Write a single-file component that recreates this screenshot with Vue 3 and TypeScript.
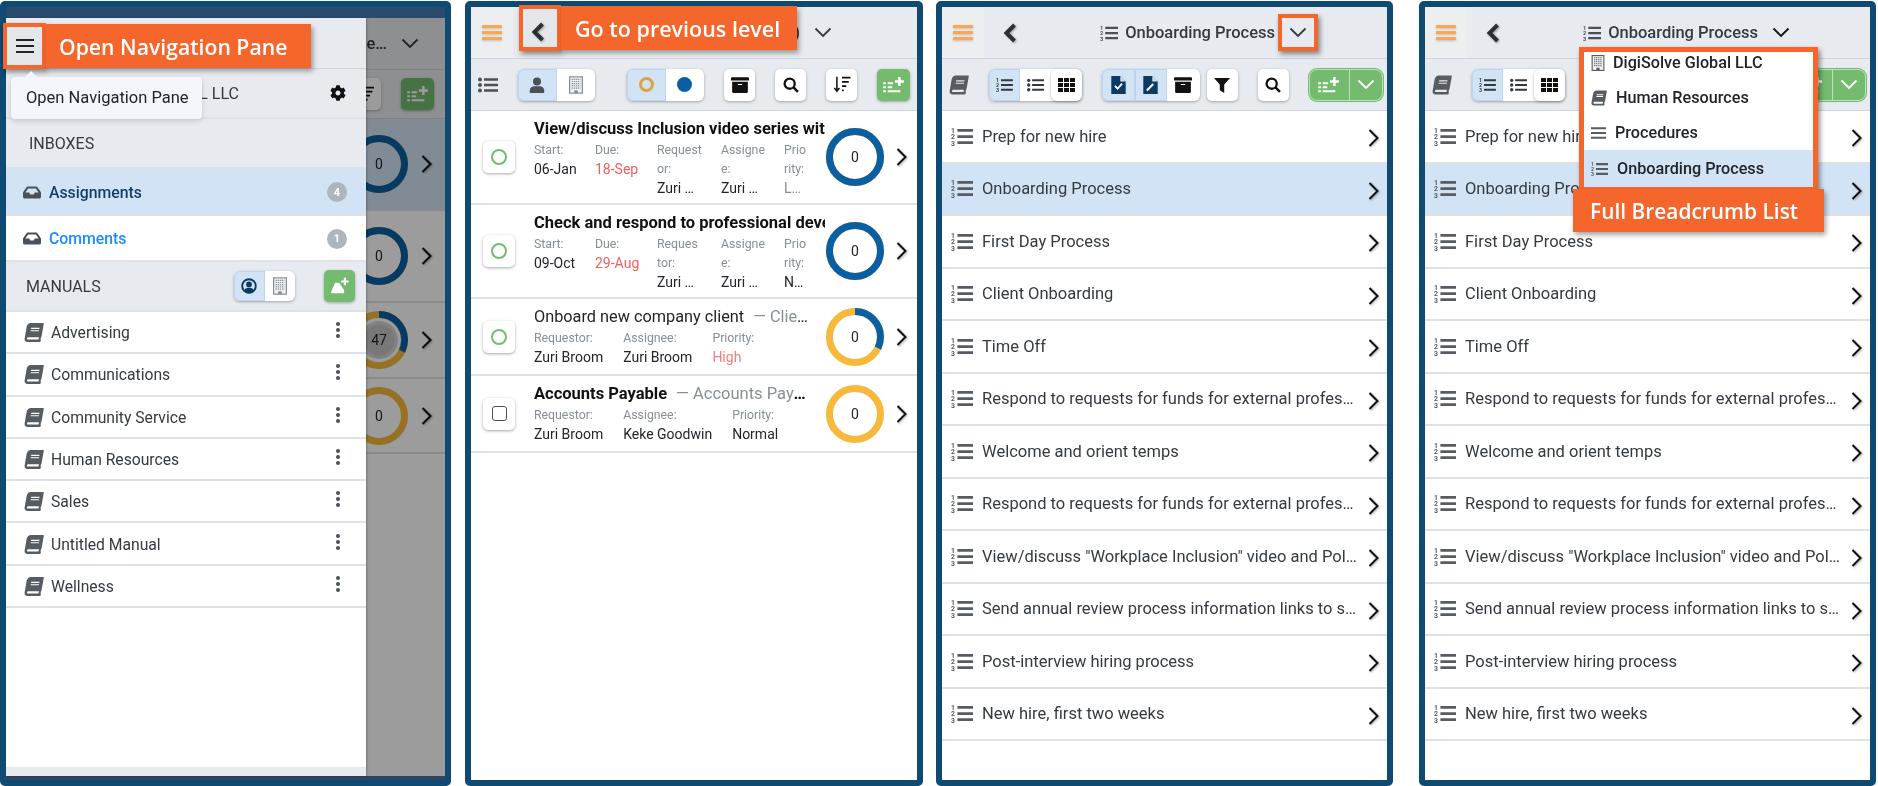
<script setup lang="ts">
type Col = { label: string; value: string; tone?: string };
type Task = {
  title: string;
  sub?: string;
  bold?: boolean;
  tall?: boolean;
  check: 'circle' | 'square';
  pct: number;
  cols: Col[];
};

const RADIUS = 25.5;
const LEN = 2 * Math.PI * RADIUS;

const tasks: Task[] = [
  {
    title: 'View/discuss Inclusion video series with leadership team',
    bold: true,
    tall: true,
    check: 'circle',
    pct: 100,
    cols: [
      { label: 'Start:', value: '06-Jan' },
      { label: 'Due:', value: '18-Sep', tone: 'late' },
      { label: 'Request\nor:', value: 'Zuri …' },
      { label: 'Assigne\ne:', value: 'Zuri …' },
      { label: 'Prio\nrity:', value: 'L…', tone: 'muted' },
    ],
  },
  {
    title: 'Check and respond to professional development requests',
    bold: true,
    tall: true,
    check: 'circle',
    pct: 100,
    cols: [
      { label: 'Start:', value: '09-Oct' },
      { label: 'Due:', value: '29-Aug', tone: 'late' },
      { label: 'Reques\ntor:', value: 'Zuri …' },
      { label: 'Assigne\ne:', value: 'Zuri …' },
      { label: 'Prio\nrity:', value: 'N…' },
    ],
  },
  {
    title: 'Onboard new company client',
    sub: 'Client Onboarding',
    check: 'circle',
    pct: 32,
    cols: [
      { label: 'Requestor:', value: 'Zuri Broom' },
      { label: 'Assignee:', value: 'Zuri Broom' },
      { label: 'Priority:', value: 'High', tone: 'high' },
    ],
  },
  {
    title: 'Accounts Payable',
    sub: 'Accounts Payable Process',
    bold: true,
    check: 'square',
    pct: 0,
    cols: [
      { label: 'Requestor:', value: 'Zuri Broom' },
      { label: 'Assignee:', value: 'Keke Goodwin' },
      { label: 'Priority:', value: 'Normal' },
    ],
  },
];

const behind = [
  { pct: 100, text: '0', active: true, h: 92 },
  { pct: 100, text: '0', h: 92 },
  { pct: 32, text: '47', h: 76, inner: true },
  { pct: 0, text: '0', h: 75 },
];

const manuals = ['Advertising', 'Communications', 'Community Service', 'Human Resources', 'Sales', 'Untitled Manual', 'Wellness'];

const processes = [
  'Prep for new hire',
  'Onboarding Process',
  'First Day Process',
  'Client Onboarding',
  'Time Off',
  'Respond to requests for funds for external professional development',
  'Welcome and orient temps',
  'Respond to requests for funds for external professional development',
  'View/discuss "Workplace Inclusion" video and Policy with new hires',
  'Send annual review process information links to supervisors and staff',
  'Post-interview hiring process',
  'New hire, first two weeks',
];

const crumbs = [
  { icon: 'building', label: 'DigiSolve Global LLC', iw: 14, gap: 8 },
  { icon: 'book', label: 'Human Resources', iw: 16, gap: 9 },
  { icon: 'bars', label: 'Procedures', iw: 15, gap: 9 },
  { icon: 'list-ol', label: 'Onboarding Process', iw: 17, gap: 9, active: true },
];

const dash = (pct: number) => `${(LEN * pct) / 100} ${LEN}`;
</script>

<template>
  <svg class="sprite" aria-hidden="true">
    <symbol id="menu" viewBox="0 0 20 16">
      <path d="M1 2h18M1 8h18M1 14h18" stroke="currentColor" stroke-width="2" fill="none" />
    </symbol>
    <symbol id="burger" viewBox="0 0 20 17">
      <path d="M1 2.5h18M1 8.5h18M1 14.5h18" stroke="currentColor" stroke-width="3" fill="none" stroke-linecap="round" />
    </symbol>
    <symbol id="back" viewBox="0 0 14 20">
      <path d="M11.5 2 3.5 10l8 8" stroke="currentColor" stroke-width="4" fill="none" />
    </symbol>
    <symbol id="down" viewBox="0 0 18 11">
      <path d="M1.5 1.5 9 9l7.5-7.5" stroke="currentColor" stroke-width="1.8" fill="none" />
    </symbol>
    <symbol id="right" viewBox="0 0 11 18">
      <path d="M1.5 1 9.5 9l-8 8" stroke="currentColor" stroke-width="2" fill="none" />
    </symbol>
    <symbol id="list-ol" viewBox="0 0 24 20">
      <path d="M7 3.2h17M7 10h17M7 16.8h17" stroke="currentColor" stroke-width="3" fill="none" />
      <g fill="currentColor" font-family="Roboto, sans-serif" font-size="7.5" font-weight="700">
        <text x="0" y="6">1</text>
        <text x="0" y="13">2</text>
        <text x="0" y="20">3</text>
      </g>
    </symbol>
    <symbol id="bars" viewBox="0 0 16 14">
      <path d="M0 2h16M0 7h16M0 12h16" stroke="currentColor" stroke-width="2.2" fill="none" />
    </symbol>
    <symbol id="list-ul" viewBox="0 0 20 16">
      <circle cx="2" cy="2.5" r="2" fill="currentColor" />
      <circle cx="2" cy="8" r="2" fill="currentColor" />
      <circle cx="2" cy="13.5" r="2" fill="currentColor" />
      <path d="M6 2.5h14M6 8h14M6 13.5h14" stroke="currentColor" stroke-width="2.4" fill="none" />
    </symbol>
    <symbol id="grid" viewBox="0 0 17 14">
      <path fill="currentColor" d="M0 0h5v4H0zM6 0h5v4H6zM12 0h5v4h-5zM0 5h5v4H0zM6 5h5v4H6zM12 5h5v4h-5zM0 10h5v4H0zM6 10h5v4H6zM12 10h5v4h-5z" />
    </symbol>
    <symbol id="book" viewBox="0 0 540 512">
      <path fill="currentColor" transform="translate(90 0) skewX(-10)" d="M448 360V24c0-13.3-10.7-24-24-24H96C43 0 0 43 0 96v320c0 53 43 96 96 96h328c13.3 0 24-10.7 24-24v-16c0-7.5-3.5-14.3-8.9-18.7-4.2-15.4-4.2-59.3 0-74.7 5.4-4.3 8.9-11.1 8.9-18.6zM128 134c0-3.3 2.7-6 6-6h212c3.3 0 6 2.7 6 6v20c0 3.3-2.7 6-6 6H134c-3.3 0-6-2.7-6-6v-20zm0 64c0-3.3 2.7-6 6-6h212c3.3 0 6 2.7 6 6v20c0 3.3-2.7 6-6 6H134c-3.3 0-6-2.7-6-6v-20zm253.4 250H96c-17.7 0-32-14.3-32-32 0-17.6 14.4-32 32-32h285.4c-1.9 17.1-1.9 46.9 0 64z" />
    </symbol>
    <symbol id="inbox" viewBox="0 64 576 384">
      <path fill="currentColor" d="M567.938 243.908L462.25 85.374A48.003 48.003 0 0 0 422.311 64H153.689a48 48 0 0 0-39.938 21.374L8.062 243.908A47.994 47.994 0 0 0 0 270.533V400c0 26.51 21.49 48 48 48h480c26.51 0 48-21.49 48-48V270.533a47.994 47.994 0 0 0-8.062-26.625zM162.252 128h251.497l85.333 128H376l-32 64H232l-32-64H76.918l85.334-128z" />
    </symbol>
    <symbol id="cog" viewBox="0 0 512 512">
      <path fill="currentColor" d="M487.4 315.7l-42.6-24.6c4.3-23.2 4.3-47 0-70.2l42.6-24.6c4.9-2.8 7.1-8.6 5.5-14-11.1-35.6-30-67.8-54.7-94.6-3.8-4.1-10-5.1-14.8-2.3L380.8 110c-17.9-15.4-38.5-27.3-60.8-35.1V25.8c0-5.6-3.9-10.5-9.4-11.7-36.7-8.2-74.3-7.8-109.2 0-5.5 1.2-9.4 6.1-9.4 11.7V75c-22.2 7.9-42.8 19.8-60.8 35.1L88.7 85.5c-4.9-2.8-11-1.9-14.8 2.3-24.7 26.7-43.6 58.9-54.7 94.6-1.7 5.4.6 11.2 5.5 14L67.3 221c-4.3 23.2-4.3 47 0 70.2l-42.6 24.6c-4.9 2.8-7.1 8.6-5.5 14 11.1 35.6 30 67.8 54.7 94.6 3.8 4.1 10 5.1 14.8 2.3l42.6-24.6c17.9 15.4 38.5 27.3 60.8 35.1v49.2c0 5.6 3.9 10.5 9.4 11.7 36.7 8.2 74.3 7.8 109.2 0 5.5-1.2 9.4-6.1 9.4-11.7v-49.2c22.2-7.9 42.8-19.8 60.8-35.1l42.6 24.6c4.9 2.8 11 1.9 14.8-2.3 24.7-26.7 43.6-58.9 54.7-94.6 1.5-5.5-.7-11.3-5.6-14.1zM256 336c-44.1 0-80-35.9-80-80s35.9-80 80-80 80 35.9 80 80-35.9 80-80 80z" />
    </symbol>
    <symbol id="archive" viewBox="0 0 512 512">
      <path fill="currentColor" d="M32 448c0 17.7 14.3 32 32 32h384c17.7 0 32-14.3 32-32V160H32v288zm160-212c0-6.6 5.4-12 12-12h104c6.6 0 12 5.4 12 12v8c0 6.6-5.4 12-12 12H204c-6.6 0-12-5.4-12-12v-8zM480 32H32C14.3 32 0 46.3 0 64v48c0 8.8 7.2 16 16 16h480c8.8 0 16-7.2 16-16V64c0-17.7-14.3-32-32-32z" />
    </symbol>
    <symbol id="search" viewBox="0 0 18 18">
      <circle cx="7.5" cy="7.5" r="5.7" stroke="currentColor" stroke-width="2.6" fill="none" />
      <path d="m11.8 11.8 5 5" stroke="currentColor" stroke-width="2.8" fill="none" />
    </symbol>
    <symbol id="sort" viewBox="0 0 20 20">
      <path d="M4 1v17M1 14l3 4 3-4" stroke="currentColor" stroke-width="1.8" fill="none" />
      <path d="M10 2h10M10 7h8M10 12h5M10 17h2" stroke="currentColor" stroke-width="2" fill="none" />
    </symbol>
    <symbol id="filter" viewBox="0 0 18 18">
      <path fill="currentColor" d="M0 1h18l-6.5 7.5V18l-5-3V8.5z" />
    </symbol>
    <symbol id="file-check" viewBox="0 0 16 20">
      <path fill="currentColor" d="M0 0h10l6 6v14H0z" />
      <path d="m4 11 3 3 5-5.500" stroke="#fff" stroke-width="2" fill="none" />
      <path d="M10 0v6h6" fill="#d3e3f6" />
    </symbol>
    <symbol id="file-pen" viewBox="0 0 16 20">
      <path fill="currentColor" d="M0 0h10l6 6v14H0z" />
      <path d="m4 16 7-7" stroke="#fff" stroke-width="2.400" fill="none" />
      <path d="M10 0v6h6" fill="#d3e3f6" />
    </symbol>
    <symbol id="user" viewBox="0 0 18 20">
      <circle cx="9" cy="5.500" r="5" fill="currentColor" />
      <path fill="currentColor" d="M0 20v-3c0-3.500 2.500-5.500 5.500-5.500h7c3 0 5.500 2 5.500 5.500v3z" />
    </symbol>
    <symbol id="user-circle" viewBox="0 0 20 20">
      <circle cx="10" cy="10" r="8.500" stroke="currentColor" stroke-width="2.400" fill="none" />
      <circle cx="10" cy="8" r="3.600" fill="currentColor" />
      <path fill="currentColor" d="M4 16c1-3 3-3.800 6-3.800s5 .8 6 3.800l-3 2.500H7z" />
    </symbol>
    <symbol id="building" viewBox="0 0 16 20">
      <rect x=".7" y=".7" width="14.600" height="18.600" fill="#f1f3f5" stroke="currentColor" stroke-width="1.400" />
      <path d="M3 3.500h10M3 6h10M3 8.500h10M3 11h10M3 13.500h10" stroke="currentColor" stroke-width="1.400" stroke-dasharray="1.500 .8" fill="none" />
      <path fill="currentColor" d="M6 16h4v3.500H6z" />
    </symbol>
    <symbol id="add-list" viewBox="0 0 24 20">
      <path d="M0 8h3M0 12.500h3M0 17h3M5 8h6M5 12.500h5M5 17h14" stroke="currentColor" stroke-width="2.200" fill="none" />
      <path d="M18 1v10M13 6h10" stroke="currentColor" stroke-width="2.800" fill="none" />
    </symbol>
    <symbol id="add-manual" viewBox="0 0 24 22">
      <path fill="currentColor" d="M1 20c0-1 .5-3 1.500-5L6 7h5l6 9v4z" />
      <path d="M18 1v9M13.500 5.500h9" stroke="currentColor" stroke-width="2.600" fill="none" />
    </symbol>
  </svg>

  <div class="page">
    <!-- panel 1: navigation drawer open over the task list -->
    <section class="panel panel-nav">
      <div class="screen screen-nav">
        <div class="under">
          <header class="topbar">
            <div class="crumb crumb-under">
              <span class="crumb-title">e…</span>
              <svg class="i-down"><use href="#down" /></svg>
            </div>
          </header>
          <div class="toolbar toolbar-under">
            <button class="btn"><svg class="i-16"><use href="#sort" /></svg></button>
            <button class="btn btn-green"><svg class="i-add"><use href="#add-list" /></svg></button>
          </div>
          <div
            v-for="(row, i) in behind"
            :key="i"
            class="under-row"
            :class="{ 'is-active': row.active }"
            :style="{ height: row.h + 'px' }"
          >
            <div class="donut">
              <svg viewBox="0 0 58 58">
                <circle class="ring ring-base" cx="29" cy="29" :r="RADIUS" />
                <circle class="ring ring-done" cx="29" cy="29" :r="RADIUS" :stroke-dasharray="dash(row.pct)" />
                <circle v-if="row.inner" class="ring-inner" cx="29" cy="29" r="19" />
              </svg>
              <span>{{ row.text }}</span>
            </div>
            <svg class="i-right"><use href="#right" /></svg>
          </div>
        </div>

        <aside class="drawer">
          <div class="drawer-head" />
          <div class="drawer-band drawer-company">
            <span>DIGISOLVE GLOBAL LLC</span>
            <svg class="i-cog"><use href="#cog" /></svg>
          </div>
          <div class="drawer-band">INBOXES</div>
          <div class="inbox-row is-active">
            <svg class="i-inbox"><use href="#inbox" /></svg>
            <span class="inbox-name">Assignments</span>
            <span class="count">4</span>
          </div>
          <div class="inbox-row">
            <svg class="i-inbox"><use href="#inbox" /></svg>
            <span class="inbox-name">Comments</span>
            <span class="count">1</span>
          </div>
          <div class="drawer-band drawer-manuals">
            <span>MANUALS</span>
            <div class="toggle toggle-small">
              <button class="cell on"><svg class="i-circle"><use href="#user-circle" /></svg></button>
              <button class="cell"><svg class="i-bld"><use href="#building" /></svg></button>
            </div>
            <button class="btn btn-green btn-manual"><svg class="i-add"><use href="#add-manual" /></svg></button>
          </div>
          <div v-for="m in manuals" :key="m" class="manual-row">
            <svg class="i-book"><use href="#book" /></svg>
            <span>{{ m }}</span>
            <span class="kebab"><i /><i /><i /></span>
          </div>
          <div class="drawer-fill" />
          <div class="drawer-foot" />
        </aside>

        <div class="mark mark-menu"><svg class="i-menu"><use href="#menu" /></svg></div>
        <div class="callout callout-menu">Open Navigation Pane</div>
        <div class="tip">Open Navigation Pane</div>
      </div>
    </section>

    <!-- panel 2: assignments -->
    <section class="panel panel-tasks">
      <div class="screen">
        <header class="topbar">
          <div class="burger"><svg class="i-burger"><use href="#burger" /></svg></div>
          <svg class="i-back"><use href="#back" /></svg>
          <div class="crumb crumb-tasks">
            <span class="crumb-title">Assignments (4)</span>
            <svg class="i-down"><use href="#down" /></svg>
          </div>
        </header>
        <div class="toolbar">
          <svg class="i-lead"><use href="#list-ul" /></svg>
          <div class="toggle">
            <button class="cell on"><svg class="i-16"><use href="#user" /></svg></button>
            <button class="cell"><svg class="i-bld"><use href="#building" /></svg></button>
          </div>
          <div class="toggle toggle-second">
            <button class="cell on"><span class="dot dot-ring" /></button>
            <button class="cell"><span class="dot" /></button>
          </div>
          <button class="btn"><svg class="i-18"><use href="#archive" /></svg></button>
          <button class="btn"><svg class="i-16"><use href="#search" /></svg></button>
          <button class="btn"><svg class="i-sort"><use href="#sort" /></svg></button>
          <button class="btn btn-green"><svg class="i-add"><use href="#add-list" /></svg></button>
        </div>

        <div
          v-for="t in tasks"
          :key="t.title"
          class="task"
          :class="{ 'task-tall': t.tall }"
        >
          <div class="checkbox">
            <span :class="t.check === 'circle' ? 'check-circle' : 'check-square'" />
          </div>
          <div class="task-body">
            <div class="task-title" :class="{ 'is-bold': t.bold, 'is-clipped': t.tall }">
              {{ t.title }}<span v-if="t.sub" class="task-sub">— {{ t.sub }}</span>
            </div>
            <div class="meta" :class="{ 'meta-fixed': t.tall }">
              <div v-for="c in t.cols" :key="c.label">
                <div class="meta-label">{{ c.label }}</div>
                <div class="meta-value" :class="c.tone">{{ c.value }}</div>
              </div>
            </div>
          </div>
          <div class="donut">
            <svg viewBox="0 0 58 58">
              <circle class="ring ring-base" cx="29" cy="29" :r="RADIUS" />
              <circle class="ring ring-done" cx="29" cy="29" :r="RADIUS" :stroke-dasharray="dash(t.pct)" />
            </svg>
            <span>0</span>
          </div>
          <svg class="i-right"><use href="#right" /></svg>
        </div>

        <div class="mark mark-back" />
        <svg class="i-back i-back-top"><use href="#back" /></svg>
        <div class="callout callout-back">Go to previous level</div>
      </div>
    </section>

    <!-- panels 3 and 4: process list, the second with its breadcrumb menu open -->
    <section
      v-for="open in [false, true]"
      :key="String(open)"
      class="panel"
      :class="open ? 'panel-menu' : 'panel-list'"
    >
      <div class="screen">
        <header class="topbar">
          <div class="burger"><svg class="i-burger"><use href="#burger" /></svg></div>
          <svg class="i-back"><use href="#back" /></svg>
          <div class="crumb">
            <svg class="i-crumb"><use href="#list-ol" /></svg>
            <span class="crumb-title">Onboarding Process</span>
            <svg class="i-down" :class="{ 'is-dark': open }"><use href="#down" /></svg>
          </div>
        </header>
        <div class="toolbar">
          <svg class="i-lead i-lead-book"><use href="#book" /></svg>
          <div class="toggle toggle-views">
            <button class="cell on"><svg class="i-view"><use href="#list-ol" /></svg></button>
            <button class="cell"><svg class="i-view"><use href="#list-ul" /></svg></button>
            <button class="cell cell-raised"><svg class="i-grid"><use href="#grid" /></svg></button>
          </div>
          <div class="toggle toggle-types">
            <button class="cell on"><svg class="i-file"><use href="#file-check" /></svg></button>
            <button class="cell on"><svg class="i-file"><use href="#file-pen" /></svg></button>
            <button class="cell"><svg class="i-18"><use href="#archive" /></svg></button>
          </div>
          <button class="btn btn-filter"><svg class="i-16"><use href="#filter" /></svg></button>
          <button class="btn"><svg class="i-16"><use href="#search" /></svg></button>
          <div class="split">
            <span class="split-main"><svg class="i-split"><use href="#add-list" /></svg></span>
            <span class="split-arrow"><svg class="i-down"><use href="#down" /></svg></span>
          </div>
        </div>

        <div
          v-for="(p, i) in processes"
          :key="i"
          class="process"
          :class="{ 'is-active': i === 1 }"
        >
          <svg class="i-proc"><use href="#list-ol" /></svg>
          <span class="process-name">{{ p }}</span>
          <svg class="i-right"><use href="#right" /></svg>
        </div>

        <template v-if="open">
          <div class="mark mark-crumbs">
            <div class="crumb-menu">
              <div v-for="c in crumbs" :key="c.label" class="crumb-item" :class="{ 'is-active': c.active }">
                <svg
                  class="crumb-icon"
                  :style="{ width: c.iw + 'px', marginRight: c.gap + 'px' }"
                ><use :href="'#' + c.icon" /></svg>
                <span>{{ c.label }}</span>
              </div>
            </div>
          </div>
          <div class="callout callout-crumbs">Full Breadcrumb List</div>
        </template>
        <div v-else class="mark mark-down" />
      </div>
    </section>
  </div>
</template>

<style scoped>
.sprite {
  position: absolute;
  left: 0;
  top: 0;
  width: 40px;
  height: 40px;
  visibility: hidden;
  pointer-events: none;
}

.page {
  display: flex;
  width: 1878px;
  height: 786px;
  overflow: hidden;
  background: #fff;
  font-family: Roboto, sans-serif;
  color: #343a40;
  filter: blur(0.35px);
}

button {
  padding: 0;
  border: 0;
  background: none;
  font: inherit;
}

svg {
  display: block;
  flex: none;
}

.panel {
  box-sizing: border-box;
  height: 785px;
  margin-top: 1px;
  border: 6px solid #0f4a73;
  border-radius: 5px;
  flex: none;
}

.panel-nav { width: 451px; }
.panel-tasks { width: 458px; margin-left: 14px; }
.panel-list { width: 457px; margin-left: 13px; }
.panel-menu { width: 457px; margin-left: 26px; }

.screen {
  position: relative;
  height: 100%;
  background: #fff;
}

.screen-nav {
  box-sizing: border-box;
  border-top: 11px solid #2a4a6e;
  border-bottom: 4px solid #2c4560;
  background: #9b9b9b;
}

.topbar {
  box-sizing: border-box;
  display: flex;
  align-items: center;
  height: 52px;
  background: #e7eaee;
  border-bottom: 1px solid #ced4da;
}

.burger {
  display: flex;
  align-items: center;
  justify-content: center;
  width: 42px;
  height: 100%;
  background: #eceef0;
  color: #fea552;
}

.i-burger { width: 20px; height: 17px; filter: drop-shadow(0 1px 1px rgba(0, 0, 0, 0.2)); }
.i-back { width: 14px; height: 20px; margin-left: 19px; color: #2b3035; filter: drop-shadow(1px 1px 1px rgba(0, 0, 0, 0.3)); }
.i-down { width: 18px; height: 11px; color: #343a40; }
.i-down.is-dark { color: #111; }

.i-back-top {
  position: absolute;
  left: 60px;
  top: 15px;
  margin: 0;
}

.crumb {
  display: flex;
  align-items: center;
  margin-left: auto;
  margin-right: 80px;
}

.crumb-tasks { margin-right: 85px; }
.crumb-under { margin-right: 26px; }

.crumb-title {
  margin-right: 14px;
  font-size: 16.5px;
  font-weight: 500;
  white-space: nowrap;
}

.i-crumb { width: 18px; height: 16px; margin-right: 7px; color: #495057; }

.toolbar {
  box-sizing: border-box;
  display: flex;
  align-items: center;
  gap: 20px;
  height: 52px;
  padding: 0 7px;
  background: #e7eaee;
  border-bottom: 1px solid #ced4da;
}

.toolbar-under {
  justify-content: flex-end;
  height: 49px;
  padding-right: 11px;
}

.i-lead { width: 20px; height: 16px; color: #495057; }
.i-lead-book { height: 20px; color: #565c62; }

.btn {
  display: flex;
  align-items: center;
  justify-content: center;
  width: 31px;
  height: 32px;
  border-radius: 5px;
  background: #fff;
  color: #111;
  box-shadow: 0 1px 3px rgba(0, 0, 0, 0.3);
  flex: none;
}

.btn-green {
  width: 33px;
  background: #74bb6f;
  color: #fff;
}

.btn-filter { margin-left: -13px; }
.i-16 { width: 16px; height: 16px; }
.i-18 { width: 18px; height: 18px; }
.i-sort { width: 18px; height: 17px; }
.i-add { width: 22px; height: 18px; }

.toggle {
  display: flex;
  height: 32px;
  border-radius: 6px;
  background: #fff;
  box-shadow: 0 1px 3px rgba(0, 0, 0, 0.3);
  flex: none;
}

.toggle-second { margin-left: 12px; }

.cell {
  display: flex;
  align-items: center;
  justify-content: center;
  width: 38.5px;
  color: #495057;
}

.cell.on {
  background: #d3e3f6;
  box-shadow: inset 0 0 0 1px #bcd4f0;
}

.cell:first-child { border-radius: 6px 0 0 6px; }
.cell:last-child { border-radius: 0 6px 6px 0; }
.i-bld { width: 14px; height: 18px; color: #868e96; }

.dot {
  width: 15px;
  height: 15px;
  border-radius: 50%;
  background: #0a5fa3;
}

.dot-ring {
  box-sizing: border-box;
  background: none;
  border: 3px solid #d9a441;
}

.toggle-views .cell { width: 31px; }
.toggle-views .cell-raised {
  border-radius: 6px;
  box-shadow: 0 1px 3px rgba(0, 0, 0, 0.3);
  background: #fff;
}

.i-view { width: 17px; height: 14px; color: #343a40; }
.i-grid { width: 17px; height: 14px; color: #111; }

.toggle-types .cell { width: 32.5px; }
.toggle-types .cell:last-child { color: #111; }
.toggle-types .cell.on { color: #0c3a60; }
.i-file { width: 15px; height: 18px; }

.split {
  display: flex;
  width: 74px;
  height: 32px;
  border: 1px solid #c0e0bc;
  box-sizing: border-box;
  border-radius: 8px;
  background: #74bb6f;
  color: #fff;
  box-shadow: 0 0 0 1px #74bb6f;
  flex: none;
}

.split-main {
  display: flex;
  align-items: center;
  justify-content: center;
  width: 39px;
  border-right: 1px solid #c0e0bc;
}

.split-arrow {
  display: flex;
  align-items: center;
  justify-content: center;
  flex: 1;
}

.split-arrow .i-down { color: #fff; }
.i-split { width: 22px; height: 18px; }

/* assignment rows */
.task {
  box-sizing: border-box;
  display: flex;
  align-items: center;
  height: 77px;
  padding: 0 10px 0 12px;
  border-bottom: 2px solid #dee2e6;
}

.task-tall { height: 94px; }

.checkbox {
  display: flex;
  align-items: center;
  justify-content: center;
  width: 32px;
  height: 32px;
  margin-right: 19px;
  border-radius: 5px;
  background: #fff;
  box-shadow: 0 1px 3px rgba(0, 0, 0, 0.35);
  flex: none;
}

.check-circle {
  box-sizing: border-box;
  width: 16px;
  height: 16px;
  border: 2.5px solid #74bb6f;
  border-radius: 50%;
}

.check-square {
  box-sizing: border-box;
  width: 15px;
  height: 15px;
  border: 1.6px solid #495057;
  border-radius: 3px;
}

.task-body {
  width: 292px;
  flex: none;
  align-self: flex-start;
  padding-top: 6px;
  overflow: hidden;
}

.task-title {
  width: 276px;
  overflow: hidden;
  font-size: 16.3px;
  line-height: 24px;
  color: #212529;
  white-space: nowrap;
  text-overflow: ellipsis;
}

.task-title.is-bold { font-weight: 700; font-size: 16.5px; color: #111; }
.task-title.is-clipped { width: 291px; text-overflow: clip; }
.task-sub { margin-left: 9px; font-weight: 400; color: #868e96; }

.meta {
  display: flex;
  gap: 20px;
  font-size: 12.3px;
  line-height: 19px;
}

.meta-fixed {
  display: grid;
  grid-template-columns: 61px 62px 64px 63px 40px;
  gap: 0;
}

.meta-label { color: #868e96; white-space: pre-line; }
.meta-value { color: #212529; white-space: nowrap; font-size: 14px; }
.meta-value.late { color: #ee5f5b; }
.meta-value.high { color: #f0817d; }
.meta-value.muted { color: #868e96; }

.donut {
  position: relative;
  width: 58px;
  height: 58px;
  flex: none;
}

.donut svg { width: 58px; height: 58px; }

.donut span {
  position: absolute;
  inset: 0;
  display: flex;
  align-items: center;
  justify-content: center;
  font-size: 14px;
  color: #212529;
}

.ring {
  fill: none;
  stroke-width: 7;
  transform: rotate(-90deg);
  transform-origin: 29px 29px;
}

.ring-base { stroke: #f6b93b; }
.ring-done { stroke: #0a5fa3; }
.ring-inner {
  fill: #c4c4c4;
  stroke: rgba(255, 255, 255, 0.25);
  stroke-width: 7;
}

.i-right {
  width: 11px;
  height: 18px;
  margin-left: auto;
  color: #111;
  filter: drop-shadow(1px 1px 1px rgba(0, 0, 0, 0.3));
}

/* process rows */
.process {
  box-sizing: border-box;
  display: flex;
  align-items: center;
  height: 52.5px;
  padding: 0 8px 0 9px;
  border-bottom: 2px solid #dee2e6;
  font-size: 16.5px;
}

.process.is-active { background: #d3e3f6; }
.i-proc { width: 22px; height: 19px; margin-right: 9px; color: #565c62; }

.process-name {
  flex: 1;
  overflow: hidden;
  padding-right: 11px;
  white-space: nowrap;
  text-overflow: ellipsis;
}

.process .i-right { margin-top: 4px; }

/* panel 1, behind the drawer */
.under {
  position: absolute;
  inset: 0;
  overflow: hidden;
  background: #fff;
}

.under::after {
  content: "";
  position: absolute;
  inset: 0;
  background: rgba(0, 0, 0, 0.39);
}

.under-row {
  box-sizing: border-box;
  display: flex;
  align-items: center;
  justify-content: flex-end;
  gap: 13px;
  padding-right: 13px;
  border-bottom: 2px solid #dee2e6;
}

.under-row.is-active { background: #d3e3f6; }
.under-row .i-right { margin-left: 0; }

.drawer {
  position: absolute;
  left: 0;
  top: 0;
  bottom: 0;
  display: flex;
  flex-direction: column;
  width: 360px;
  background: #fff;
  box-shadow: 1px 0 2px rgba(0, 0, 0, 0.25);
}

.drawer-head {
  height: 51px;
  background: #e7eaee;
  border-bottom: 1px solid #ced4da;
  box-sizing: border-box;
}

.drawer-band {
  box-sizing: border-box;
  display: flex;
  align-items: center;
  height: 50px;
  padding-left: 23px;
  background: #e7eaee;
  border-bottom: 2px solid #dee2e6;
  font-size: 16px;
  color: #343a40;
}

.drawer-company { justify-content: flex-end; gap: 91px; padding: 0 20px 0 0; }
.i-cog { width: 16px; height: 16px; color: #111; }
.drawer-manuals { padding-left: 20px; }
.drawer-manuals .toggle { margin-left: auto; }

.toggle-small { height: 30px; }
.toggle-small .cell { width: 30.5px; }
.i-circle { width: 16px; height: 16px; color: #0c3a60; }

.btn-manual {
  width: 31px;
  margin: 0 11px 0 29px;
}

.inbox-row {
  box-sizing: border-box;
  display: flex;
  align-items: center;
  height: 46.5px;
  padding: 2px 19px 0 17px;
  border-bottom: 2px solid #dee2e6;
  font-size: 15.8px;
  font-weight: 500;
  color: #1a8cff;
}

.inbox-row.is-active { background: #d3e3f6; color: #123f6a; }
.i-inbox { width: 18px; height: 15px; margin-right: 8px; color: #495057; }
.inbox-name { flex: 1; }

.count {
  display: flex;
  align-items: center;
  justify-content: center;
  width: 20px;
  height: 20px;
  border-radius: 50%;
  background: #adb5bd;
  color: #fff;
  font-size: 11px;
  font-weight: 700;
}

.manual-row {
  box-sizing: border-box;
  display: flex;
  align-items: center;
  height: 42.3px;
  padding: 1px 26px 0 18px;
  border-bottom: 2px solid #dee2e6;
  font-size: 15.7px;
}

.i-book { width: 20px; height: 19px; margin-right: 7px; color: #565c62; }

.kebab {
  display: flex;
  flex-direction: column;
  gap: 2px;
  margin: -5px 0 0 auto;
}

.kebab i {
  width: 4px;
  height: 4px;
  border-radius: 50%;
  background: #495057;
}

.drawer-fill { flex: 1; }
.drawer-foot { height: 9px; background: #e7eaee; }

/* annotations laid over the screenshots */
.mark {
  position: absolute;
  box-sizing: border-box;
  border: 4px solid #f4662c;
  box-shadow: 2px 3px 5px rgba(0, 0, 0, 0.45);
}

.mark-menu {
  left: -3px;
  top: 5px;
  display: flex;
  align-items: center;
  justify-content: center;
  width: 43px;
  height: 46px;
  background: #e4e7ea;
}

.i-menu { width: 20px; height: 16px; color: #212529; }

.mark-back {
  left: 48px;
  top: -2px;
  width: 42px;
  height: 46px;
  background: #e4e7ea;
}

.mark-down {
  left: 336px;
  top: 7px;
  width: 40px;
  height: 37px;
}

.mark-crumbs {
  left: 154px;
  top: 40px;
  width: 239px;
  height: 145px;
  border-width: 5px;
  background: #fff;
}

.callout {
  position: absolute;
  display: flex;
  align-items: center;
  box-sizing: border-box;
  background: #f4662c;
  color: #fff;
  font-family: "Open Sans", sans-serif;
  font-weight: 600;
  white-space: nowrap;
  box-shadow: 2px 3px 5px rgba(0, 0, 0, 0.35);
}

.callout-menu {
  left: 40px;
  top: 6px;
  width: 265px;
  height: 44px;
  padding-left: 13px;
  font-size: 21.2px;
}

.callout-back {
  left: 90px;
  top: -1px;
  width: 236px;
  height: 44px;
  padding-left: 14px;
  font-size: 21.5px;
}

.callout-crumbs {
  left: 148px;
  top: 182px;
  width: 251px;
  height: 43px;
  padding-left: 17px;
  font-size: 20.9px;
}

.tip {
  position: absolute;
  left: 5px;
  top: 59px;
  box-sizing: border-box;
  width: 191px;
  height: 42px;
  padding-left: 15px;
  border-radius: 4px;
  background: #f3f7fb;
  font-size: 16.5px;
  line-height: 42px;
  color: #212529;
  box-shadow: 0 2px 5px rgba(0, 0, 0, 0.15);
}

.tip::before {
  content: "";
  position: absolute;
  left: 14px;
  top: -6px;
  border: 6px solid transparent;
  border-top: 0;
  border-bottom-color: #f3f7fb;
}

.crumb-menu {
  height: 100%;
  overflow: hidden;
  font-size: 16.2px;
  font-weight: 500;
  color: #212529;
}

.crumb-item {
  display: flex;
  align-items: center;
  height: 35px;
  padding-left: 7px;
  color: #212529;
}

.crumb-item:first-child { margin-top: -7px; }
.crumb-item.is-active { height: 37px; background: #d3e3f6; }
.crumb-icon { height: 16px; color: #565c62; }
</style>
